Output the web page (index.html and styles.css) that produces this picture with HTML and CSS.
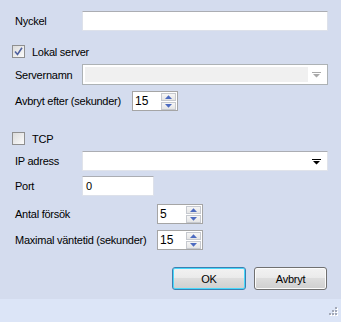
FILE: index.html
```html
<!DOCTYPE html>
<html>
<head>
<meta charset="utf-8">
<link rel="stylesheet" href="styles.css">
</head>
<body>
<div class="dialog">
  <div class="form">
    <div class="row r1">
      <span class="lbl lbl-short">Nyckel</span>
      <div class="textbox wide"></div>
    </div>
    <div class="row check-row r2">
      <span class="check"><svg width="9" height="9" viewBox="0 0 9 9"><path d="M1 4.5 L3.5 7.5 L8 0.8" fill="none" stroke="#4f61a0" stroke-width="1.6"/></svg></span>
      <span class="check-text">Lokal server</span>
    </div>
    <div class="row r3">
      <span class="lbl lbl-short">Servernamn</span>
      <div class="combo disabled wide">
        <div class="combo-field"></div>
        <span class="combo-arrow"><svg width="9" height="6" viewBox="0 0 9 6"><path d="M0 0H9V1H0Z M1 2H8L4.5 5.5Z" fill="#a9a9a9"/></svg></span>
      </div>
    </div>
    <div class="row r4">
      <span class="lbl lbl-mid">Avbryt efter (sekunder)</span>
      <div class="spin">
        <span class="spin-value">15</span>
        <span class="spin-btns">
          <span class="spin-btn"><svg width="7" height="4" viewBox="0 0 7 4"><path d="M0 4H7L3.5 0.3Z M0 4H7V4.5H0Z" fill="#4d6bc0"/></svg></span>
          <span class="spin-btn"><svg width="7" height="4" viewBox="0 0 7 4"><path d="M0 0H7L3.5 3.7Z" fill="#4d6bc0"/></svg></span>
        </span>
      </div>
    </div>
    <div class="row check-row r5">
      <span class="check"></span>
      <span class="check-text">TCP</span>
    </div>
    <div class="row r6">
      <span class="lbl lbl-short">IP adress</span>
      <div class="combo wide">
        <div class="combo-field white"></div>
        <span class="combo-arrow"><svg width="9" height="6" viewBox="0 0 9 6"><path d="M0 0H9V1H0Z M1 2H8L4.5 5.5Z" fill="#000"/></svg></span>
      </div>
    </div>
    <div class="row r7">
      <span class="lbl lbl-short">Port</span>
      <div class="textbox port"><span class="tb-value">0</span></div>
    </div>
    <div class="row r8">
      <span class="lbl lbl-long">Antal försök</span>
      <div class="spin">
        <span class="spin-value">5</span>
        <span class="spin-btns">
          <span class="spin-btn"><svg width="7" height="4" viewBox="0 0 7 4"><path d="M0 4H7L3.5 0.3Z" fill="#4d6bc0"/></svg></span>
          <span class="spin-btn"><svg width="7" height="4" viewBox="0 0 7 4"><path d="M0 0H7L3.5 3.7Z" fill="#4d6bc0"/></svg></span>
        </span>
      </div>
    </div>
    <div class="row r9">
      <span class="lbl lbl-long">Maximal väntetid (sekunder)</span>
      <div class="spin">
        <span class="spin-value">15</span>
        <span class="spin-btns">
          <span class="spin-btn"><svg width="7" height="4" viewBox="0 0 7 4"><path d="M0 4H7L3.5 0.3Z" fill="#4d6bc0"/></svg></span>
          <span class="spin-btn"><svg width="7" height="4" viewBox="0 0 7 4"><path d="M0 0H7L3.5 3.7Z" fill="#4d6bc0"/></svg></span>
        </span>
      </div>
    </div>
    <div class="buttons">
      <button class="btn default">OK</button>
      <button class="btn">Avbryt</button>
    </div>
  </div>
  <div class="status">
    <svg class="grip" width="12" height="12" viewBox="0 0 12 12">
      <g fill="#ffffff">
        <rect x="9" y="1" width="2" height="2"/>
        <rect x="6" y="4" width="2" height="2"/><rect x="9" y="4" width="2" height="2"/>
        <rect x="3" y="7" width="2" height="2"/><rect x="6" y="7" width="2" height="2"/><rect x="9" y="7" width="2" height="2"/>
      </g>
      <g fill="#a3a9b8">
        <rect x="8" y="0" width="2" height="2"/>
        <rect x="5" y="3" width="2" height="2"/><rect x="8" y="3" width="2" height="2"/>
        <rect x="2" y="6" width="2" height="2"/><rect x="5" y="6" width="2" height="2"/><rect x="8" y="6" width="2" height="2"/>
      </g>
    </svg>
  </div>
</div>
</body>
</html>
```

FILE: styles.css
```css
html, body {
  margin: 0;
  padding: 0;
}
body {
  width: 341px;
  height: 322px;
  background: #d4dcee;
  font-family: "Liberation Sans", Arial, sans-serif;
  font-size: 11px;
  letter-spacing: -0.25px;
  color: #000;
  overflow: hidden;
}
.dialog {
  display: flex;
  flex-direction: column;
  height: 322px;
}
.form {
  flex: 1;
  display: flex;
  flex-direction: column;
  padding-top: 11px;
}
.row {
  display: flex;
  align-items: center;
  height: 20px;
}
.r2 { margin-top: 14px; height: 13px; }
.r3 { margin-top: 6px; height: 21px; }
.r4 { margin-top: 6px; }
.r5 { margin-top: 21px; height: 13px; }
.r6 { margin-top: 6px; }
.r7 { margin-top: 5px; }
.r8 { margin-top: 8px; }
.r9 { margin-top: 6px; }

.lbl {
  box-sizing: border-box;
  padding-left: 15px;
  flex: none;
}
.lbl-short { width: 82px; }
.lbl-mid { width: 132px; }
.lbl-long { width: 157px; }

.textbox {
  box-sizing: border-box;
  height: 20px;
  background: #fff;
  border: 1px solid #dde1ea;
  border-top-color: #abadb3;
  display: flex;
  align-items: center;
}
.wide { width: 246px; }
.port { width: 72px; }
.tb-value { padding-left: 3px; }

.check-row { padding-left: 12px; }
.check {
  box-sizing: border-box;
  width: 13px;
  height: 13px;
  border: 1px solid #8f8f8f;
  background: linear-gradient(135deg, #dcdcdc, #fbfbfb);
  display: flex;
  align-items: center;
  justify-content: center;
  flex: none;
}
.check-text { margin-left: 7px; }

.combo {
  box-sizing: border-box;
  height: 21px;
  border: 1px solid #abadb3;
  background: #fff;
  display: flex;
  align-items: center;
  padding: 2px;
}
.combo.disabled {
  border-color: #adb2b5;
}
.combo-field {
  flex: 1;
  height: 15px;
  background: #f0f0f0;
}
.combo-field.white { background: #fff; }
.r6 .combo { height: 20px; border-color: #e0e3ea; border-top-color: #abadb3; }
.combo-arrow {
  width: 17px;
  display: flex;
  justify-content: center;
  align-items: center;
  padding-top: 1px;
}

.spin {
  box-sizing: border-box;
  width: 46px;
  height: 20px;
  border: 1px solid #a5a5a5;
  background: #fff;
  display: flex;
  align-items: center;
}
.spin-value {
  flex: 1;
  padding-left: 2px;
  font-size: 12px;
  letter-spacing: 0;
}
.spin-btns {
  display: flex;
  flex-direction: column;
  width: 15px;
  height: 17px;
  margin-right: 1px;
  gap: 1px;
}
.spin-btn {
  box-sizing: border-box;
  height: 8px;
  border: 1px solid #c6c9cf;
  background: linear-gradient(#f6f6f6, #e5e5e5);
  display: flex;
  align-items: center;
  justify-content: center;
}
.spin-btn svg { display: block; }

.buttons {
  display: flex;
  justify-content: flex-end;
  gap: 8px;
  margin-top: 17px;
  padding-right: 14px;
}
.btn {
  box-sizing: border-box;
  width: 73px;
  height: 23px;
  border: 1px solid #707070;
  border-radius: 3px;
  background: linear-gradient(#f2f2f2 0%, #ebebeb 45%, #dddddd 50%, #cfcfcf 100%);
  font-family: "Liberation Sans", Arial, sans-serif;
  font-size: 11px;
  letter-spacing: -0.25px;
  color: #000;
  padding: 0;
  box-shadow: inset 0 0 0 1px #fcfcfc;
}
.btn.default {
  border-color: #3c7fb1;
  box-shadow: inset 0 0 0 1px #48d8fb;
  width: 74px;
}

.status {
  height: 23px;
  background: #dce5f7;
  display: flex;
  justify-content: flex-end;
  align-items: flex-end;
}
.grip {
  display: block;
  margin: 0 2px 3px 0;
}
```
